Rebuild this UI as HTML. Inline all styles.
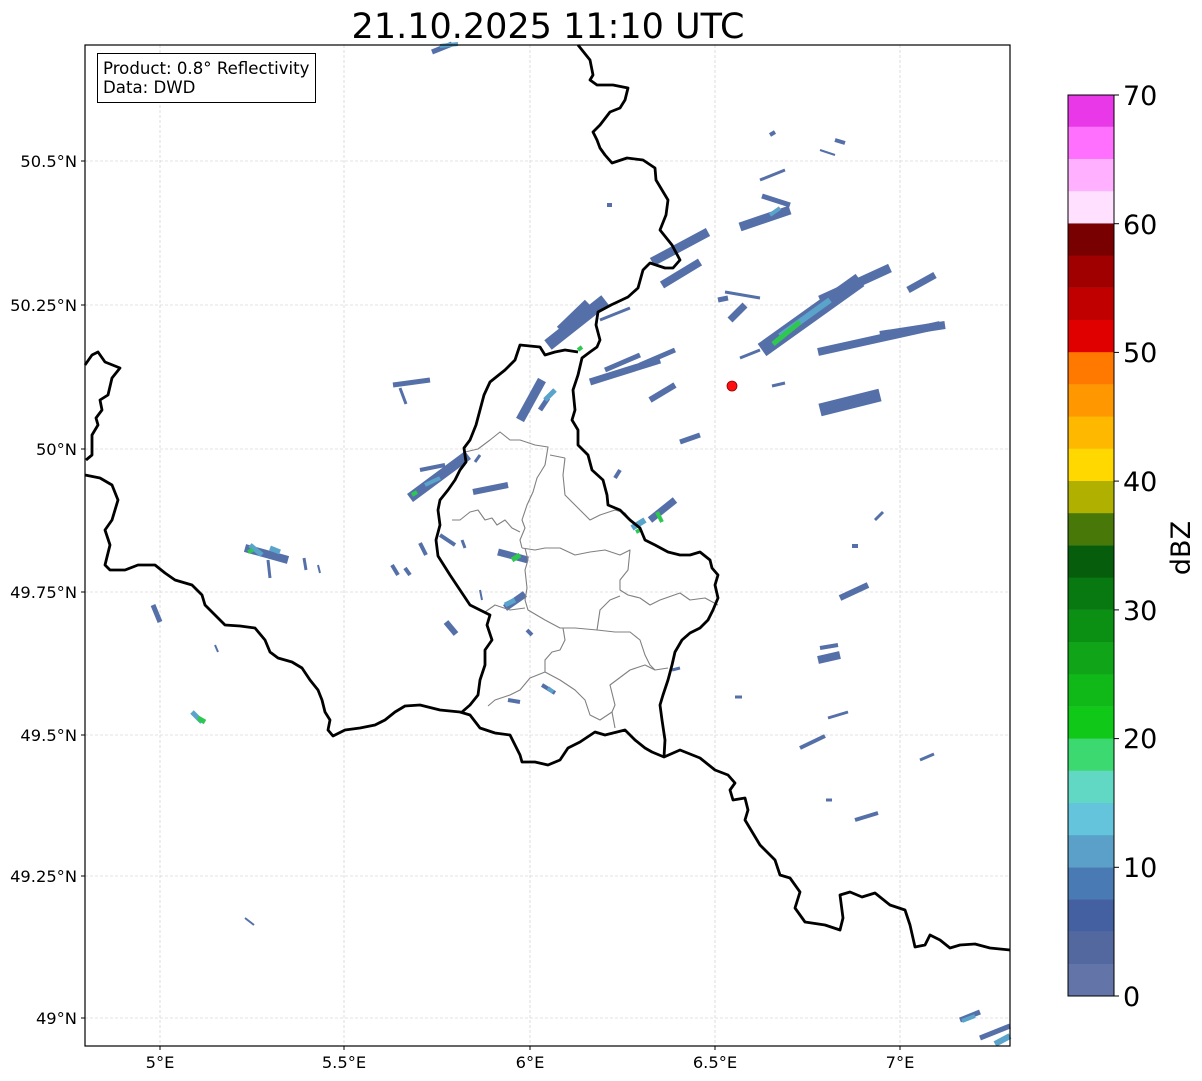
<!DOCTYPE html>
<html><head><meta charset="utf-8"><style>
html,body{margin:0;padding:0;background:#fff;}
svg{display:block;font-family:"DejaVu Sans","Liberation Sans",sans-serif;}
</style></head><body>
<svg width="1202" height="1081" viewBox="0 0 1202 1081" xmlns="http://www.w3.org/2000/svg">
<rect width="1202" height="1081" fill="#fff"/>
<text x="548" y="38" font-size="35" text-anchor="middle" fill="#000">21.10.2025 11:10 UTC</text>

<g stroke="#c8c8c8" stroke-width="0.6" stroke-dasharray="3,2">
<line x1="160" y1="45" x2="160" y2="1046"/>
<line x1="344" y1="45" x2="344" y2="1046"/>
<line x1="530" y1="45" x2="530" y2="1046"/>
<line x1="715" y1="45" x2="715" y2="1046"/>
<line x1="900" y1="45" x2="900" y2="1046"/>
<line x1="85" y1="161" x2="1010" y2="161"/>
<line x1="85" y1="305" x2="1010" y2="305"/>
<line x1="85" y1="449" x2="1010" y2="449"/>
<line x1="85" y1="592" x2="1010" y2="592"/>
<line x1="85" y1="735" x2="1010" y2="735"/>
<line x1="85" y1="876" x2="1010" y2="876"/>
<line x1="85" y1="1018" x2="1010" y2="1018"/>
</g>

<g stroke-linecap="butt" fill="none">
<g stroke="#5570a8">
<path d="M432 52 L452 44" stroke-width="5"/>
<path d="M245 548 L288 560" stroke-width="8"/>
<path d="M268 560 L270 578" stroke-width="3"/>
<path d="M153 605 L160 622" stroke-width="5"/>
<path d="M215 645 L218 652" stroke-width="2"/>
<path d="M304 558 L306 570" stroke-width="3"/>
<path d="M318 565 L320 573" stroke-width="2"/>
<path d="M393 385 L430 380" stroke-width="5"/>
<path d="M400 388 L406 404" stroke-width="3"/>
<path d="M410 498 L468 455" stroke-width="10"/>
<path d="M420 470 L445 465" stroke-width="4"/>
<path d="M473 492 L508 485" stroke-width="6"/>
<path d="M475 462 L480 455" stroke-width="3"/>
<path d="M392 565 L398 575" stroke-width="4"/>
<path d="M405 568 L410 575" stroke-width="4"/>
<path d="M420 543 L426 555" stroke-width="4"/>
<path d="M440 535 L455 545" stroke-width="4"/>
<path d="M462 540 L465 548" stroke-width="3"/>
<path d="M498 552 L528 560" stroke-width="7"/>
<path d="M505 608 L525 594" stroke-width="7"/>
<path d="M446 622 L456 634" stroke-width="6"/>
<path d="M480 590 L482 600" stroke-width="2"/>
<path d="M508 700 L520 702" stroke-width="4"/>
<path d="M527 630 L532 635" stroke-width="4"/>
<path d="M542 685 L555 693" stroke-width="4"/>
<path d="M520 420 L542 380" stroke-width="9"/>
<path d="M540 410 L548 398" stroke-width="5"/>
<path d="M548 345 L605 300" stroke-width="12"/>
<path d="M560 330 L588 303" stroke-width="9"/>
<path d="M590 382 L660 360" stroke-width="7"/>
<path d="M605 370 L640 355" stroke-width="5"/>
<path d="M640 365 L675 350" stroke-width="5"/>
<path d="M600 320 L630 308" stroke-width="3"/>
<path d="M652 262 L708 232" stroke-width="9"/>
<path d="M662 285 L700 262" stroke-width="8"/>
<path d="M680 442 L700 435" stroke-width="5"/>
<path d="M615 478 L620 470" stroke-width="4"/>
<path d="M650 520 L675 500" stroke-width="7"/>
<path d="M725 292 L760 298" stroke-width="3"/>
<path d="M718 300 L728 298" stroke-width="5"/>
<path d="M740 227 L790 210" stroke-width="9"/>
<path d="M762 196 L790 205" stroke-width="5"/>
<path d="M730 320 L745 305" stroke-width="7"/>
<path d="M762 350 L860 280" stroke-width="15"/>
<path d="M820 300 L890 268" stroke-width="9"/>
<path d="M818 352 L940 325" stroke-width="8"/>
<path d="M880 335 L945 325" stroke-width="8"/>
<path d="M908 290 L935 275" stroke-width="7"/>
<path d="M820 410 L880 395" stroke-width="13"/>
<path d="M740 358 L760 350" stroke-width="3"/>
<path d="M772 386 L785 383" stroke-width="3"/>
<path d="M650 400 L675 385" stroke-width="6"/>
<path d="M835 140 L845 143" stroke-width="4"/>
<path d="M770 135 L775 132" stroke-width="4"/>
<path d="M820 150 L835 155" stroke-width="2"/>
<path d="M760 180 L785 170" stroke-width="3"/>
<path d="M607 205 L612 205" stroke-width="4"/>
<path d="M840 598 L868 585" stroke-width="6"/>
<path d="M818 660 L840 655" stroke-width="8"/>
<path d="M820 648 L838 645" stroke-width="4"/>
<path d="M828 718 L848 712" stroke-width="3"/>
<path d="M800 748 L825 736" stroke-width="4"/>
<path d="M855 820 L878 813" stroke-width="4"/>
<path d="M920 760 L934 754" stroke-width="3"/>
<path d="M875 520 L883 512" stroke-width="3"/>
<path d="M852 546 L858 546" stroke-width="4"/>
<path d="M245 918 L254 925" stroke-width="2"/>
<path d="M960 1020 L980 1012" stroke-width="5"/>
<path d="M980 1038 L1010 1026" stroke-width="5"/>
<path d="M735 697 L742 697" stroke-width="3"/>
<path d="M826 800 L832 800" stroke-width="3"/>
<path d="M672 670 L680 668" stroke-width="3"/>
</g>
<g stroke="#5aa4cc">
<path d="M250 545 L262 555" stroke-width="5"/>
<path d="M270 548 L280 552" stroke-width="5"/>
<path d="M192 712 L202 722" stroke-width="5"/>
<path d="M425 485 L440 478" stroke-width="4"/>
<path d="M505 605 L515 600" stroke-width="5"/>
<path d="M545 400 L555 390" stroke-width="5"/>
<path d="M780 336 L830 300" stroke-width="6"/>
<path d="M962 1021 L975 1016" stroke-width="4"/>
<path d="M995 1044 L1010 1036" stroke-width="6"/>
<path d="M632 528 L645 520" stroke-width="6"/>
<path d="M548 688 L553 692" stroke-width="4"/>
<path d="M770 215 L780 208" stroke-width="4"/>
<path d="M440 46 L458 44" stroke-width="4"/>
</g>
<g stroke="#2ec850">
<path d="M773 344 L800 322" stroke-width="5"/>
<path d="M198 718 L205 722" stroke-width="5"/>
<path d="M512 560 L520 555" stroke-width="5"/>
<path d="M657 512 L662 522" stroke-width="4"/>
<path d="M636 532 L640 530" stroke-width="4"/>
<path d="M412 495 L417 492" stroke-width="4"/>
<path d="M248 552 L253 550" stroke-width="4"/>
<path d="M578 350 L582 347" stroke-width="4"/>
</g>
</g>

<g stroke="#808080" stroke-width="1.1" fill="none" stroke-linejoin="round">
<path d="M465 452 L478 449 L490 440 L500 432 L510 440 L520 440 L535 445 L548 447 L545 465 L537 478 L533 492 L527 505 L522 520 L525 528 L520 540 L522 548"/>
<path d="M452 520 L460 520 L470 512 L478 510 L485 520 L492 518 L497 525 L505 520 L512 528 L520 532"/>
<path d="M565 458 L563 475 L565 495 L580 510 L590 520 L600 515 L615 510 L625 513 L630 520"/>
<path d="M522 548 L535 550 L545 548 L560 548 L575 555 L590 552 L605 550 L620 555 L630 550 L628 570 L620 580 L620 590 L628 595 L640 598 L650 605 L660 600 L680 593 L690 600 L705 598 L718 605"/>
<path d="M620 596 L610 600 L600 610 L597 630"/>
<path d="M525 548 L528 560 L525 570 L527 588 L525 600 L528 610 L545 620 L560 628 L575 628 L597 630 L615 632 L630 632 L640 640 L645 655 L650 665 L655 670 L668 668"/>
<path d="M485 612 L495 605 L510 610 L525 608"/>
<path d="M563 628 L565 640 L560 650 L552 652 L545 660 L545 672 L530 678 L520 690 L510 695 L495 700 L488 706"/>
<path d="M545 672 L560 680 L575 690 L585 700 L590 715 L600 720 L612 712 L615 705 L610 685 L630 670 L645 665 L655 670"/>
<path d="M612 712 L615 728"/>
<path d="M565 458 L550 455"/>
</g>

<g stroke="#000" stroke-width="2.8" fill="none" stroke-linejoin="round">
<path d="M578 45 L590 60 L593 75 L590 80 L597 85 L613 85 L628 88 L625 100 L620 108 L610 112 L600 125 L593 132 L597 140 L600 148 L605 155 L612 163 L627 158 L643 160 L655 168 L656 180 L665 195 L668 200 L666 215 L660 230 L672 245 L680 260 L673 268 L665 268 L650 263 L643 270 L638 288 L628 297 L611 305 L598 312 L596 325 L600 340 L597 347 L590 352 L582 358 L578 375 L573 390 L575 410 L572 420 L578 430 L578 445 L588 455 L592 470 L603 480 L607 495 L608 505 L620 510 L630 520 L640 528 L645 540 L655 545 L668 552 L680 555 L690 555 L700 552 L710 560 L712 568 L718 575 L715 585 L718 598 L713 610 L708 620 L700 628 L690 633 L682 640 L675 652 L672 665 L668 680 L663 695 L660 705 L662 720 L665 740 L664 757"/>
<path d="M578 352 L565 350 L555 352 L545 355 L540 347 L520 345 L515 360 L505 370 L490 382 L484 395 L480 410 L476 425 L470 440 L464 448 L466 462 L460 470 L455 480 L448 490 L440 500 L438 510 L440 525 L436 540 L438 556 L450 575 L460 590 L470 605 L480 610 L490 615 L487 625 L492 640 L485 650 L485 665 L480 680 L478 695 L470 705 L462 712"/>
<path d="M85 475 L100 478 L112 485 L118 500 L112 520 L105 530 L110 545 L105 565 L110 570 L125 570 L138 565 L155 565 L165 573 L175 580 L192 585 L202 595 L205 605 L215 615 L225 625 L240 626 L255 628 L265 640 L270 652 L278 658 L285 660 L292 662 L302 668 L310 680 L318 690 L322 700 L325 712 L330 720 L328 730 L333 736 L345 730 L360 728 L375 725 L385 720 L395 712 L405 706 L420 705 L440 710 L460 712 L470 715 L480 728 L495 733 L510 735 L515 745 L520 755 L522 762 L535 762 L548 765 L560 760 L568 748 L580 742 L595 732 L605 735 L625 730 L635 740 L645 748 L652 752 L664 757 L680 750 L700 758 L715 770 L728 775 L735 783 L730 790 L733 800 L745 798 L748 810 L745 820 L760 845 L775 860 L780 875 L790 878 L800 892 L795 908 L805 922 L825 925 L840 930 L843 918 L840 895 L850 892 L862 897 L875 893 L890 905 L905 910 L910 925 L915 947 L925 945 L930 935 L940 940 L950 948 L960 945 L975 944 L990 948 L1010 950"/>
<path d="M85 365 L92 355 L98 352 L105 362 L120 368 L112 378 L108 395 L100 400 L102 410 L96 418 L98 425 L92 435 L92 455 L86 460"/>
</g>

<circle cx="732" cy="386" r="5" fill="#ff1010" stroke="#800" stroke-width="0.8"/>

<rect x="85" y="45" width="925" height="1001" fill="none" stroke="#000" stroke-width="1.2"/>

<rect x="97.5" y="53.5" width="218" height="49" fill="#fff" stroke="#000" stroke-width="1"/>
<text x="103" y="74" font-size="16.6">Product: 0.8° Reflectivity</text>
<text x="103" y="93" font-size="16.6">Data: DWD</text>

<g font-size="16.3" fill="#000" text-anchor="end">
<text x="77" y="167">50.5°N</text>
<text x="77" y="311">50.25°N</text>
<text x="77" y="455">50°N</text>
<text x="77" y="598">49.75°N</text>
<text x="77" y="741">49.5°N</text>
<text x="77" y="882">49.25°N</text>
<text x="77" y="1024">49°N</text>
</g>
<g stroke="#000" stroke-width="1">
<line x1="81" y1="161" x2="85" y2="161"/><line x1="81" y1="305" x2="85" y2="305"/><line x1="81" y1="449" x2="85" y2="449"/><line x1="81" y1="592" x2="85" y2="592"/><line x1="81" y1="735" x2="85" y2="735"/><line x1="81" y1="876" x2="85" y2="876"/><line x1="81" y1="1018" x2="85" y2="1018"/>
<line x1="160" y1="1046" x2="160" y2="1050"/><line x1="344" y1="1046" x2="344" y2="1050"/><line x1="530" y1="1046" x2="530" y2="1050"/><line x1="715" y1="1046" x2="715" y2="1050"/><line x1="900" y1="1046" x2="900" y2="1050"/>
</g>
<g font-size="16.3" fill="#000" text-anchor="middle">
<text x="160" y="1068">5°E</text>
<text x="344" y="1068">5.5°E</text>
<text x="530" y="1068">6°E</text>
<text x="715" y="1068">6.5°E</text>
<text x="900" y="1068">7°E</text>
</g>

<g>
<rect x="1068" y="963.8" width="46" height="32.4" fill="#6374a8"/>
<rect x="1068" y="931.6" width="46" height="32.4" fill="#5468a0"/>
<rect x="1068" y="899.4" width="46" height="32.4" fill="#4460a0"/>
<rect x="1068" y="867.2" width="46" height="32.4" fill="#4a7ab4"/>
<rect x="1068" y="835.0" width="46" height="32.4" fill="#5aa0c8"/>
<rect x="1068" y="802.8" width="46" height="32.4" fill="#64c4dc"/>
<rect x="1068" y="770.6" width="46" height="32.4" fill="#60d8c4"/>
<rect x="1068" y="738.4" width="46" height="32.4" fill="#3cd870"/>
<rect x="1068" y="706.2" width="46" height="32.4" fill="#10c818"/>
<rect x="1068" y="674.0" width="46" height="32.4" fill="#10b818"/>
<rect x="1068" y="641.8" width="46" height="32.4" fill="#10a418"/>
<rect x="1068" y="609.6" width="46" height="32.4" fill="#0c9014"/>
<rect x="1068" y="577.4" width="46" height="32.4" fill="#087810"/>
<rect x="1068" y="545.2" width="46" height="32.4" fill="#065e0c"/>
<rect x="1068" y="513.0" width="46" height="32.4" fill="#487808"/>
<rect x="1068" y="480.8" width="46" height="32.4" fill="#b0b000"/>
<rect x="1068" y="448.6" width="46" height="32.4" fill="#ffd800"/>
<rect x="1068" y="416.4" width="46" height="32.4" fill="#ffb800"/>
<rect x="1068" y="384.2" width="46" height="32.4" fill="#ff9800"/>
<rect x="1068" y="352.0" width="46" height="32.4" fill="#ff7800"/>
<rect x="1068" y="319.8" width="46" height="32.4" fill="#e00000"/>
<rect x="1068" y="287.6" width="46" height="32.4" fill="#c00000"/>
<rect x="1068" y="255.4" width="46" height="32.4" fill="#a00000"/>
<rect x="1068" y="223.2" width="46" height="32.4" fill="#780000"/>
<rect x="1068" y="191.0" width="46" height="32.4" fill="#ffe0ff"/>
<rect x="1068" y="158.8" width="46" height="32.4" fill="#ffb0ff"/>
<rect x="1068" y="126.6" width="46" height="32.4" fill="#ff70ff"/>
<rect x="1068" y="95" width="46" height="31.8" fill="#e838e8"/>
<rect x="1068" y="95" width="46" height="901" fill="none" stroke="#000" stroke-width="1"/>
<g stroke="#000" stroke-width="1">
<line x1="1114" y1="996" x2="1119" y2="996"/><line x1="1114" y1="867.3" x2="1119" y2="867.3"/><line x1="1114" y1="738.6" x2="1119" y2="738.6"/><line x1="1114" y1="609.9" x2="1119" y2="609.9"/><line x1="1114" y1="481.1" x2="1119" y2="481.1"/><line x1="1114" y1="352.4" x2="1119" y2="352.4"/><line x1="1114" y1="223.7" x2="1119" y2="223.7"/><line x1="1114" y1="95" x2="1119" y2="95"/>
</g>
<g font-size="27" fill="#000">
<text x="1123" y="1006">0</text>
<text x="1123" y="877">10</text>
<text x="1123" y="748">20</text>
<text x="1123" y="620">30</text>
<text x="1123" y="491">40</text>
<text x="1123" y="362">50</text>
<text x="1123" y="234">60</text>
<text x="1123" y="105">70</text>
</g>
<text transform="translate(1190,548) rotate(-90)" font-size="27" text-anchor="middle">dBZ</text>
</g>
</svg>
</body></html>
